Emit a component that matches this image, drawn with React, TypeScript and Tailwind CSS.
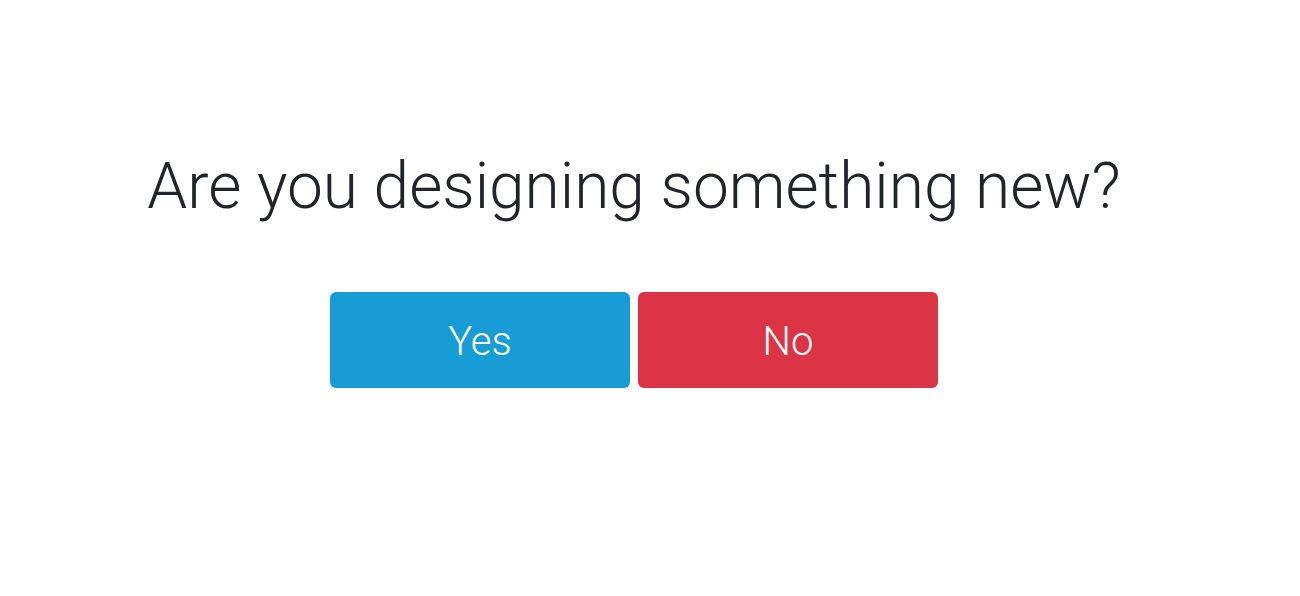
import React from "react";

const App = () => {
  return (
    <div className="min-h-[596px] w-[1300px] bg-white font-['Roboto',sans-serif]">
      <div className="flex w-[1268px] flex-col items-center pt-[149px]">
        <h1 className="text-[64px] leading-[1.2] font-light text-[#212529]">
          Are you designing something new?
        </h1>
        <div className="mt-[66px] flex gap-2">
          <button className="h-24 w-[300px] rounded-md bg-[#189cd5] pt-1 text-[40px] font-light text-white">
            Yes
          </button>
          <button className="h-24 w-[300px] rounded-md bg-[#db3445] pt-1 text-[40px] font-light text-white">
            No
          </button>
        </div>
      </div>
    </div>
  );
};

export default App;
